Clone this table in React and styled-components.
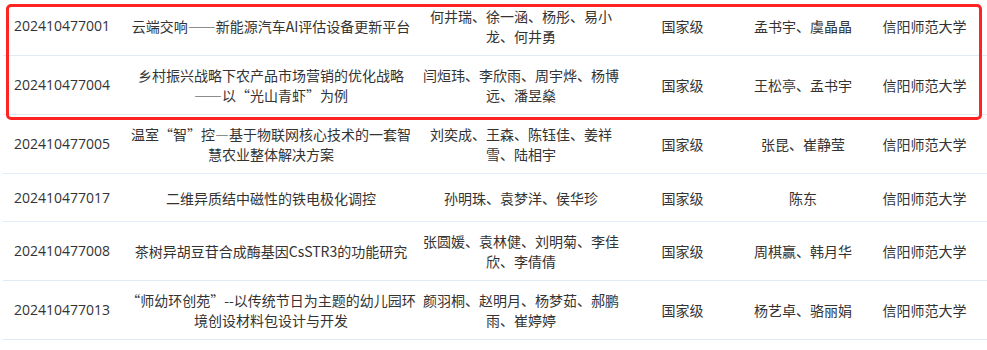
import styled, { createGlobalStyle } from "styled-components";

const projects = [
  {
    id: "202410477001",
    title: "云端交响——新能源汽车AI评估设备更新平台",
    members: "何井瑞、徐一涵、杨彤、易小龙、何井勇",
    level: "国家级",
    tutor: "孟书宇、虞晶晶",
    school: "信阳师范大学",
  },
  {
    id: "202410477004",
    title: "乡村振兴战略下农产品市场营销的优化战略——以“光山青虾”为例",
    members: "闫烜玮、李欣雨、周宇烨、杨博远、潘昱燊",
    level: "国家级",
    tutor: "王松亭、孟书宇",
    school: "信阳师范大学",
  },
  {
    id: "202410477005",
    title: "温室“智”控—基于物联网核心技术的一套智慧农业整体解决方案",
    members: "刘奕成、王森、陈钰佳、姜祥雪、陆相宇",
    level: "国家级",
    tutor: "张昆、崔静莹",
    school: "信阳师范大学",
  },
  {
    id: "202410477017",
    title: "二维异质结中磁性的铁电极化调控",
    members: "孙明珠、袁梦洋、侯华珍",
    level: "国家级",
    tutor: "陈东",
    school: "信阳师范大学",
  },
  {
    id: "202410477008",
    title: "茶树异胡豆苷合成酶基因CsSTR3的功能研究",
    members: "张圆媛、袁林健、刘明菊、李佳欣、李倩倩",
    level: "国家级",
    tutor: "周棋赢、韩月华",
    school: "信阳师范大学",
  },
  {
    id: "202410477013",
    title: "“师幼环创苑”--以传统节日为主题的幼儿园环境创设材料包设计与开发",
    members: "颜羽桐、赵明月、杨梦茹、郝鹏雨、崔婷婷",
    level: "国家级",
    tutor: "杨艺卓、骆丽娟",
    school: "信阳师范大学",
  },
];

export default function App() {
  return (
    <>
      <GlobalStyle />
      <Page lang="zh-CN">
        <Table>
          {projects.map((p) => (
            <Row key={p.id}>
              <IdCell>{p.id}</IdCell>
              <Cell>{p.title}</Cell>
              <Cell>{p.members}</Cell>
              <Cell>{p.level}</Cell>
              <Cell>{p.tutor}</Cell>
              <Cell>{p.school}</Cell>
            </Row>
          ))}
        </Table>
        <Highlight />
      </Page>
    </>
  );
}

const GlobalStyle = createGlobalStyle`
  html, body {
    margin: 0;
    padding: 0;
    background: #ffffff;
    overflow: hidden;
  }
`;

const Page = styled.div`
  position: relative;
  width: 987px;
  height: 350px;
  overflow: hidden;
  padding-left: 3px;
  box-sizing: border-box;
  font-family: "Noto Sans CJK SC", "Noto Sans", sans-serif;
  font-size: 14px;
  line-height: 20px;
  color: #333333;
`;

const Table = styled.div`
  display: flex;
  flex-direction: column;
  width: 984px;
  margin-top: -3px;
`;

const Row = styled.div`
  display: grid;
  grid-template-columns: 118px 300px 200px 123px 118px 125px;
  align-items: center;
  min-height: 47px;
  border-bottom: 1px solid #e1ebf6;
`;

const Cell = styled.div`
  padding: 9px 4px;
  text-align: center;
  word-break: break-all;

  &:nth-child(3) {
    padding: 9px 0;
  }
`;

const IdCell = styled(Cell)`
  font-family: "Open Sans", "Noto Sans CJK SC", sans-serif;
`;

const Highlight = styled.div`
  position: absolute;
  left: 6px;
  top: 4px;
  width: 976px;
  height: 116px;
  box-sizing: border-box;
  border: 3px solid #ff2424;
  border-radius: 5px;
  pointer-events: none;
`;
